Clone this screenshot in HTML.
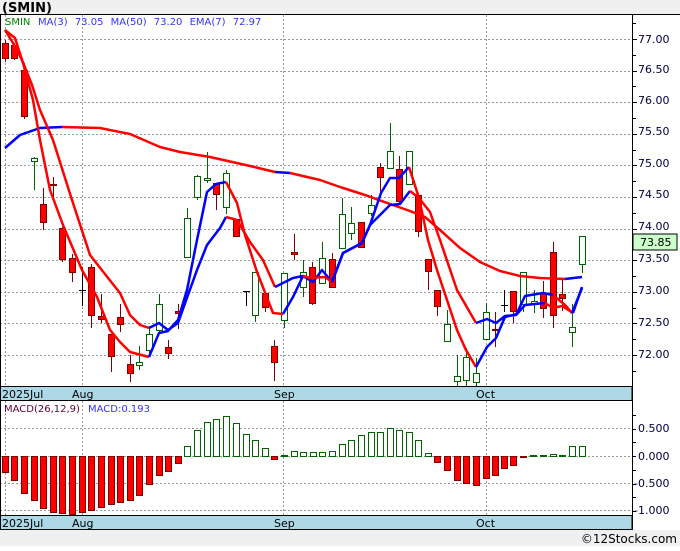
<!DOCTYPE html>
<html><head><meta charset="utf-8">
<style>
html,body{margin:0;padding:0;background:#fff;}
body{width:680px;height:546px;overflow:hidden;font-family:"Liberation Sans",Tahoma,sans-serif;}
svg text{font-family:"DejaVu Sans","Liberation Sans",sans-serif;}
</style></head><body>
<svg id="s" width="680" height="546" xmlns="http://www.w3.org/2000/svg" shape-rendering="crispEdges">
<rect x="0" y="0" width="680" height="546" fill="#fff"/>
<rect x="0" y="0" width="680" height="14" fill="#f0f0f0"/>
<text x="2" y="12" font-size="13" font-weight="bold" fill="#000" font-family="Liberation Sans">(SMIN)</text>
<rect x="0" y="530" width="680" height="16" fill="#f0f0f0"/>
<text x="677" y="543" font-size="12" text-anchor="end" fill="#000" font-family="Liberation Sans">©12Stocks.com</text>
<g id="grid" stroke="#999" stroke-dasharray="2,2" stroke-width="1"></g>
<g id="plot"></g>
<rect x="0" y="386.5" width="632" height="14" fill="#add8e6" stroke="#000"/>
<rect x="0" y="515.5" width="632" height="14" fill="#add8e6" stroke="#000"/>
<g font-size="11" fill="#000">
<text x="2" y="398">2025Jul</text><text x="72" y="398">Aug</text><text x="274" y="398">Sep</text><text x="476" y="398">Oct</text>
<text x="2" y="527">2025Jul</text><text x="72" y="527">Aug</text><text x="274" y="527">Sep</text><text x="476" y="527">Oct</text>
</g>
<line x1="0" y1="14.5" x2="680" y2="14.5" stroke="#000"/>
<line x1="632.5" y1="14" x2="632.5" y2="530" stroke="#000"/>
<line x1="0.5" y1="14" x2="0.5" y2="530" stroke="#000"/>
<g id="ticks" stroke="#000"></g>
<g font-size="11" fill="#000040" id="labels">
<text x="638" y="43">77.00</text><text x="638" y="73">76.50</text><text x="638" y="104">76.00</text>
<text x="638" y="135">75.50</text><text x="638" y="167">75.00</text><text x="638" y="198">74.50</text>
<text x="638" y="230">74.00</text><text x="638" y="262">73.50</text><text x="638" y="294">73.00</text>
<text x="638" y="326">72.50</text><text x="638" y="358">72.00</text>
<text x="638" y="432">0.500</text><text x="638" y="460">0.000</text><text x="634" y="487">-0.500</text><text x="634" y="514">-1.000</text>
</g>
<rect x="633" y="234" width="44" height="16" fill="#ccffcc" stroke="#000"/>
<text x="640" y="246" font-size="11" fill="#000">73.85</text>
<text x="5" y="25" font-size="10" fill="#008000">SMIN</text>
<text x="38" y="25" font-size="10" fill="#3333ff" word-spacing="4" xml:space="preserve">MA(3) 73.05 MA(50) 73.20 EMA(7) 72.97</text>
<text x="4" y="412" font-size="10" fill="#600030">MACD(26,12,9)</text>
<text x="88" y="412" font-size="10" fill="#3333ff">MACD:0.193</text>
</svg>
<script>
var NS="http://www.w3.org/2000/svg";
function el(p,t,a){var e=document.createElementNS(NS,t);for(var k in a)e.setAttribute(k,a[k]);p.appendChild(e);return e;}
var g=document.getElementById('grid'),pl=document.getElementById('plot'),tk=document.getElementById('ticks');
function py(p){return 39+(77-p)*63.2;}
for(var p=72;p<=77.01;p+=0.5){var y=Math.round(py(p))+0.5;el(g,'line',{x1:0,y1:y,x2:632,y2:y});}
[428,456,483,510].forEach(function(y){el(g,'line',{x1:0,y1:y+0.5,x2:632,y2:y+0.5});});
[5,82,283,486].forEach(function(x){el(g,'line',{x1:x+0.5,y1:15,x2:x+0.5,y2:386});el(g,'line',{x1:x+0.5,y1:401,x2:x+0.5,y2:515});});
for(var p=71.5;p<=77.6;p+=0.25){var y=Math.round(py(p))+0.5;if(y>16&&y<386)el(tk,'line',{x1:632,y1:y,x2:(Math.abs(p*2-Math.round(p*2))<0.01)?637:636,y2:y});}
for(var v=-1.25;v<=0.8;v+=0.25){var y=Math.round(456-v*55)+0.5;if(y>402&&y<515)el(tk,'line',{x1:632,y1:y,x2:636,y2:y});}
var C=[[5,43,58,40,62,'r'],[14,45,58,43,60,'r'],[24,70,116,63,119,'r'],[34,158,161,157,190,'g'],[43,204,222,188,230,'r'],[53,184,185,177,200,'r'],[62,228,259,227,262,'r'],[72,258,272,254,282,'r'],[82,290,290,267,306,'k'],[91,267,315,264,328,'r'],[101,316,319,294,323,'r'],[111,334,356,334,372,'r'],[120,317,324,304,332,'r'],[130,364,373,355,382,'r'],[139,362,365,346,370,'g'],[149,334,350,326,356,'g'],[159,304,330,294,333,'g'],[168,347,353,340,359,'r'],[178,311,313,304,329,'r'],[187,218,257,208,258,'g'],[197,176,197,175,200,'g'],[207,178,180,152,183,'g'],[216,183,194,183,210,'r'],[226,173,207,170,214,'g'],[236,219,236,219,237,'r'],[246,291,291,291,306,'k'],[255,272,315,272,322,'g'],[265,293,307,293,312,'r'],[274,346,362,340,381,'r'],[284,273,320,273,328,'g'],[294,252,254,234,260,'r'],[303,272,287,260,297,'g'],[312,267,303,262,305,'r'],[322,258,283,242,283,'g'],[332,259,287,253,287,'r'],[342,214,248,198,248,'g'],[351,223,233,207,240,'g'],[361,222,247,222,247,'r'],[371,205,213,195,216,'g'],[380,167,177,163,192,'r'],[390,151,168,123,168,'g'],[399,169,201,156,204,'r'],[409,151,184,151,184,'g'],[418,195,231,195,237,'r'],[428,259,271,259,290,'r'],[437,290,306,290,316,'r'],[447,324,341,310,341,'g'],[457,376,381,355,387,'g'],[466,357,380,348,387,'g'],[476,373,382,358,387,'g'],[486,312,339,303,339,'g'],[495,329,329,312,347,'r'],[504,305,305,290,312,'k'],[513,291,311,291,323,'r'],[523,272,304,272,312,'g'],[534,301,303,290,313,'g'],[543,293,308,281,318,'r'],[553,252,315,242,328,'r'],[562,294,298,279,311,'r'],[572,327,332,304,347,'g'],[582,236,264,236,273,'g']];
C.forEach(function(c){var col=c[5]=='r'?'#800000':(c[5]=='g'?'#006400':'#000');
el(pl,'line',{x1:c[0]+0.5,y1:c[3],x2:c[0]+0.5,y2:c[4],stroke:col});
var h=Math.max(c[2]-c[1],1);
if(c[5]=='k'){el(pl,'line',{x1:c[0]-3,y1:c[1]+0.5,x2:c[0]+4,y2:c[1]+0.5,stroke:col});}
else el(pl,'rect',{x:c[0]-2.5,y:c[1]+0.5,width:6,height:h,fill:c[5]=='r'?'#ff0000':'#fff',stroke:col});});
function line(pts,col){el(pl,'polyline',{points:pts.map(function(p){return p.join(',')}).join(' '),fill:'none',stroke:col,'stroke-width':2.5,'shape-rendering':'auto','stroke-linejoin':'round'});}
line([[5,148],[20,135],[40,128],[62,127]],'#0000ff');
line([[62,127],[100,128],[130,134],[160,147],[180,152],[210,157],[250,166],[275,172]],'#ff0000');
line([[275,172],[290,173]],'#0000ff');
line([[290,173],[320,180],[340,187],[365,195],[390,204],[410,211],[425,217],[440,230],[460,248],[480,262],[500,271],[520,276],[540,278],[565,279]],'#ff0000');
line([[565,279],[582,277]],'#0000ff');
// MA3
line([[5,30],[15,38],[23,63],[33,100],[40,140],[50,190],[63,225],[82,270],[97,297],[110,330],[120,342],[130,352],[149,357]],'#ff0000');
line([[149,357],[159,333],[168,331],[178,320],[187,290],[197,240],[207,192],[216,184],[226,182]],'#0000ff');
line([[226,182],[237,203],[245,235],[257,272],[273,313],[283,314]],'#ff0000');
line([[283,314],[293,297],[303,276],[313,282],[322,270],[332,282]],'#0000ff');
line([[332,282],[343,253],[362,243],[370,225],[381,193],[390,178],[399,178],[409,167]],'#0000ff');
line([[409,167],[419,198],[428,240],[437,270],[447,300],[457,330],[466,350],[476,367]],'#ff0000');
line([[476,367],[487,347],[496,338],[505,317],[517,314],[525,305],[535,304],[545,303]],'#0000ff');
line([[545,303],[553,308],[562,306],[573,313]],'#ff0000');
line([[573,313],[582,287]],'#0000ff');
// EMA7
line([[5,30],[13,43],[22,60],[32,85],[40,110],[53,140],[72,200],[90,255],[112,283],[120,293],[130,315],[140,325],[149,328]],'#ff0000');
line([[149,328],[159,323],[168,330],[178,323],[188,295],[197,270],[207,245],[220,228],[226,217]],'#0000ff');
line([[226,217],[237,220],[250,242],[263,260],[275,287]],'#ff0000');
line([[275,287],[293,278],[303,276]],'#0000ff');
line([[303,276],[310,278],[325,277],[332,282]],'#ff0000');
line([[332,282],[343,253],[362,243],[370,225],[390,205],[400,204],[410,191]],'#0000ff');
line([[410,191],[419,198],[430,212],[440,240],[457,290],[476,323]],'#ff0000');
line([[476,323],[487,319],[496,323],[505,316],[516,315],[525,296],[543,293],[553,295]],'#0000ff');
line([[553,295],[565,305],[572,313]],'#ff0000');
line([[572,313],[582,288]],'#0000ff');
var M=[[5,472],[14,480],[24,493],[34,500],[43,508],[53,512],[62,513],[72,514],[82,512],[91,510],[101,507],[111,504],[120,502],[130,500],[139,495],[149,484],[159,475],[168,471],[178,463],[187,446],[197,430],[207,422],[216,419],[226,416],[236,423],[246,434],[255,440],[265,448],[274,459],[284,455],[294,451],[303,452],[313,452],[322,452],[332,451],[342,444],[351,440],[361,435],[371,432],[380,432],[390,428],[399,430],[409,432],[418,440],[428,453],[437,462],[447,470],[457,480],[466,483],[476,485],[486,478],[495,475],[504,468],[513,465],[523,457],[533,455],[543,455],[553,454],[562,455],[572,446],[582,446]];
M.forEach(function(m){var z=456;if(m[1]>z){el(pl,'rect',{x:m[0]-2.5,y:z+0.5,width:6,height:m[1]-z,fill:m[0]==523?'#800000':'#ff0000',stroke:'#800000'});}
else{var h=z-m[1];if(h<2){el(pl,'line',{x1:m[0]-3,y1:z,x2:m[0]+4,y2:z,stroke:'#006400','stroke-width':2});}else el(pl,'rect',{x:m[0]-2.5,y:m[1]+0.5,width:6,height:h,fill:'#fff',stroke:'#006400'});}});
</script>
</body></html>
